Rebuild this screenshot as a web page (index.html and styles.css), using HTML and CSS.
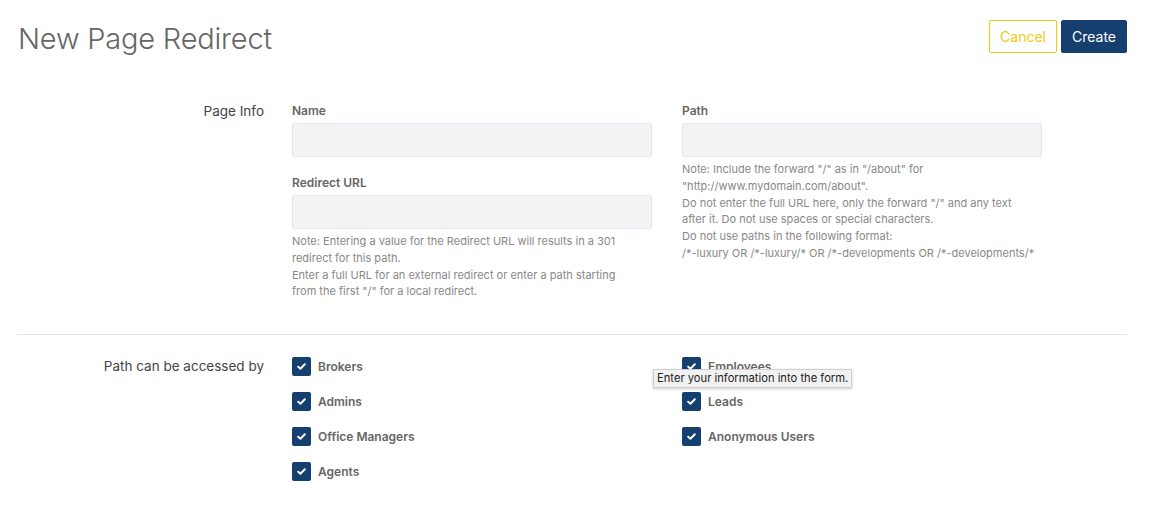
FILE: index.html
```html
<!DOCTYPE html>
<html lang="en">
<head>
<meta charset="utf-8">
<title>New Page Redirect</title>
<link rel="stylesheet" href="styles.css">
</head>
<body>
<div class="page">
  <header class="header">
    <h1 class="title">New Page Redirect</h1>
    <div class="actions">
      <button class="btn btn-cancel">Cancel</button>
      <button class="btn btn-create">Create</button>
    </div>
  </header>

  <section class="section section-info">
    <div class="section-label">Page Info</div>
    <div class="fields">
      <div class="col">
        <div class="field">
          <label class="field-label">Name</label>
          <div class="input"></div>
        </div>
        <div class="field field-gap">
          <label class="field-label">Redirect URL</label>
          <div class="input"></div>
          <p class="note">Note: Entering a value for the Redirect URL will results in a 301<br>redirect for this path.<br>Enter a full URL for an external redirect or enter a path starting<br>from the first "/" for a local redirect.</p>
        </div>
      </div>
      <div class="col">
        <div class="field">
          <label class="field-label">Path</label>
          <div class="input"></div>
          <p class="note">Note: Include the forward "/" as in "/about" for<br>"http://www.mydomain.com/about".<br>Do not enter the full URL here, only the forward "/" and any text<br>after it. Do not use spaces or special characters.<br>Do not use paths in the following format:<br>/*-luxury OR /*-luxury/* OR /*-developments OR /*-developments/*</p>
        </div>
      </div>
    </div>
  </section>

  <hr class="divider">

  <section class="section section-access">
    <div class="section-label">Path can be accessed by</div>
    <div class="fields">
      <div class="col checks">
        <div class="check"><span class="box"><svg viewBox="0 0 10 8" width="9" height="7"><path d="M1.2 4.2 L3.8 6.6 L8.8 1.4" fill="none" stroke="#fff" stroke-width="2.2" stroke-linecap="round" stroke-linejoin="round"/></svg></span><span class="check-label">Brokers</span></div>
        <div class="check"><span class="box"><svg viewBox="0 0 10 8" width="9" height="7"><path d="M1.2 4.2 L3.8 6.6 L8.8 1.4" fill="none" stroke="#fff" stroke-width="2.2" stroke-linecap="round" stroke-linejoin="round"/></svg></span><span class="check-label">Admins</span></div>
        <div class="check"><span class="box"><svg viewBox="0 0 10 8" width="9" height="7"><path d="M1.2 4.2 L3.8 6.6 L8.8 1.4" fill="none" stroke="#fff" stroke-width="2.2" stroke-linecap="round" stroke-linejoin="round"/></svg></span><span class="check-label">Office Managers</span></div>
        <div class="check"><span class="box"><svg viewBox="0 0 10 8" width="9" height="7"><path d="M1.2 4.2 L3.8 6.6 L8.8 1.4" fill="none" stroke="#fff" stroke-width="2.2" stroke-linecap="round" stroke-linejoin="round"/></svg></span><span class="check-label">Agents</span></div>
      </div>
      <div class="col checks">
        <div class="check"><span class="box"><svg viewBox="0 0 10 8" width="9" height="7"><path d="M1.2 4.2 L3.8 6.6 L8.8 1.4" fill="none" stroke="#fff" stroke-width="2.2" stroke-linecap="round" stroke-linejoin="round"/></svg></span><span class="check-label">Employees</span></div>
        <div class="check"><span class="box"><svg viewBox="0 0 10 8" width="9" height="7"><path d="M1.2 4.2 L3.8 6.6 L8.8 1.4" fill="none" stroke="#fff" stroke-width="2.2" stroke-linecap="round" stroke-linejoin="round"/></svg></span><span class="check-label">Leads</span></div>
        <div class="check"><span class="box"><svg viewBox="0 0 10 8" width="9" height="7"><path d="M1.2 4.2 L3.8 6.6 L8.8 1.4" fill="none" stroke="#fff" stroke-width="2.2" stroke-linecap="round" stroke-linejoin="round"/></svg></span><span class="check-label">Anonymous Users</span></div>
      </div>
    </div>
    <div class="tooltip">Enter your information into the form.</div>
  </section>
</div>
</body>
</html>
```

FILE: styles.css
```css
* { box-sizing: border-box; }

html, body {
  margin: 0;
  padding: 0;
  background: #fff;
  font-family: Inter, "Noto Sans", "Liberation Sans", sans-serif;
}

.page {
  width: 1110px;
  margin-left: 17px;
  position: relative;
}

.header {
  display: flex;
  justify-content: space-between;
  align-items: flex-start;
  padding-top: 20px;
}

.title {
  margin: 2px 0 0 1px;
  font-size: 29px;
  line-height: 34px;
  font-weight: 300;
  color: #666;
  letter-spacing: -0.2px;
}

.actions {
  display: flex;
  gap: 4px;
}

.btn {
  height: 33px;
  padding: 0 10px;
  font-family: inherit;
  font-size: 14px;
  border-radius: 2px;
  cursor: pointer;
}

.btn-cancel {
  background: #fff;
  border: 1px solid #f2c811;
  color: #f2c811;
}

.btn-create {
  background: #143f6e;
  border: 1px solid #143f6e;
  color: #fff;
}

.section {
  display: grid;
  grid-template-columns: 247px 1fr;
  column-gap: 28px;
  position: relative;
}

.section-info {
  margin-top: 46px;
}

.section-label {
  text-align: right;
  font-size: 13.5px;
  line-height: 18px;
  color: #444;
}

.section-access .section-label {
  line-height: 19px;
}

.fields {
  display: grid;
  grid-template-columns: 360px 360px;
  column-gap: 30px;
}

.field-label {
  display: block;
  font-size: 12px;
  line-height: 18px;
  font-weight: 600;
  color: #666;
  margin-bottom: 3px;
}

.field-gap {
  margin-top: 17px;
}

.input {
  height: 34px;
  background: #f2f3f5;
  border: 1px solid #e6e7ea;
  border-radius: 2px;
}

.note {
  margin: 4px 0 0;
  font-size: 11px;
  line-height: 16.8px;
  color: #888;
  white-space: nowrap;
}

.divider {
  border: 0;
  border-top: 1px solid #e3e3e3;
  margin: 34px 0 22px;
}

.checks {
  display: flex;
  flex-direction: column;
  gap: 16px;
}

.check {
  display: flex;
  align-items: center;
  gap: 7px;
  height: 19px;
}

.box {
  width: 19px;
  height: 19px;
  border-radius: 2px;
  background: #143f6e;
  display: flex;
  align-items: center;
  justify-content: center;
}

.check-label {
  font-size: 12px;
  font-weight: 600;
  color: #666;
}

.tooltip {
  position: absolute;
  left: 636px;
  top: 12px;
  padding: 0 3px;
  height: 19px;
  line-height: 17px;
  font-size: 11.2px;
  color: #222;
  background: #f1f1f1;
  border: 1px solid #cfcfcf;
  box-shadow: 0 1px 3px rgba(0,0,0,0.2);
  white-space: nowrap;
}
```
